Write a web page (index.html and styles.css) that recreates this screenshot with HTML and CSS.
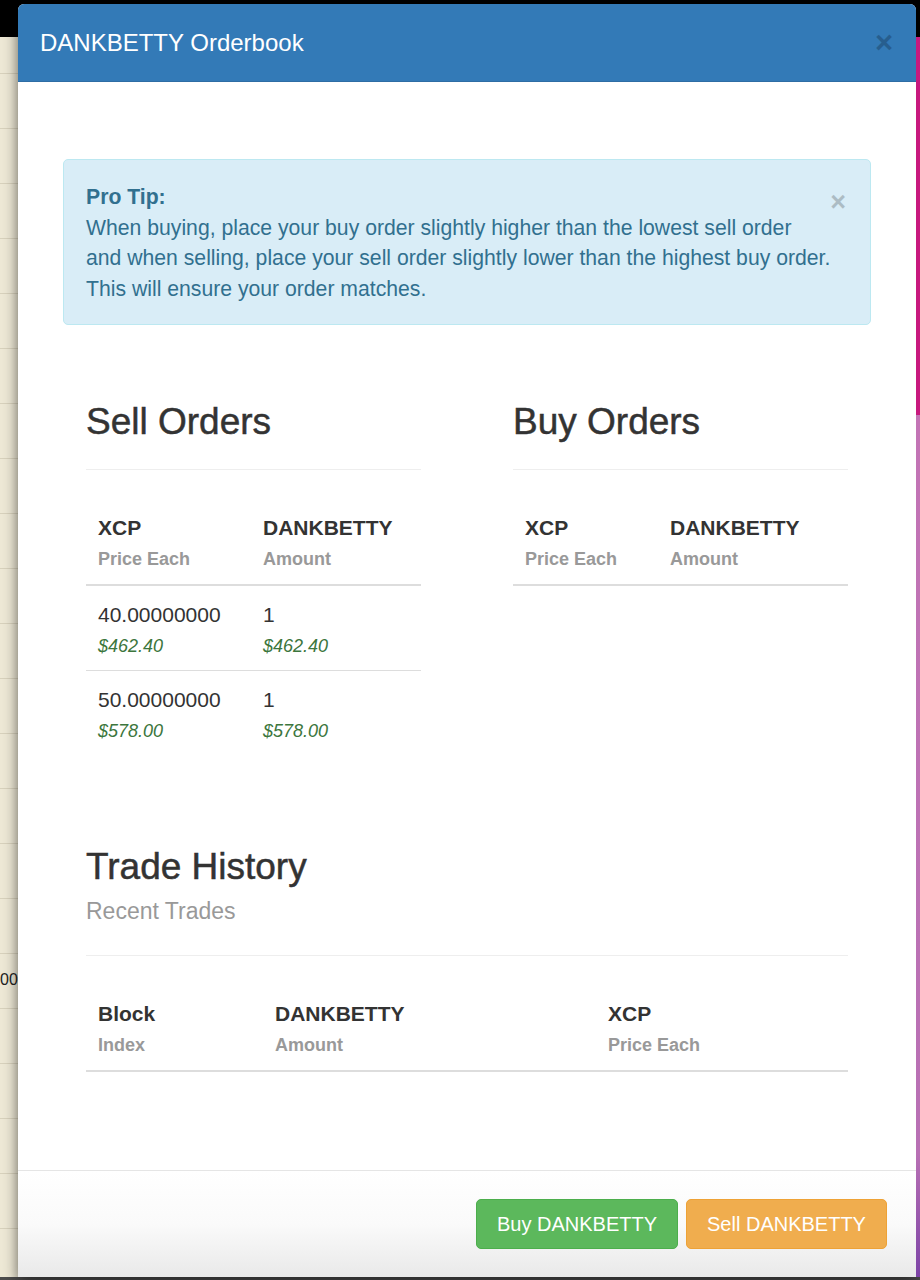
FILE: index.html
```html
<!DOCTYPE html>
<html lang="en">

<head>
  <meta charset="UTF-8">
  <title>DANKBETTY Orderbook</title>
  <link rel="stylesheet" href="styles.css">
</head>

<body>
  <div class="screen">
    <!-- page behind the modal -->
    <div class="side side-left"><span class="stray">00</span></div>

    <div class="modal">
      <div class="modal-header">
        <h4 class="modal-title">DANKBETTY Orderbook</h4>
        <button class="close">&times;</button>
      </div>

      <div class="modal-body">
        <div class="alert">
          <div class="alert-text">
            <strong>Pro Tip:</strong><br>
            When buying, place your buy order slightly higher than the lowest sell order<br>
            and when selling, place your sell order slightly lower than the highest buy order.<br>
            This will ensure your order matches.
          </div>
          <button class="close close-alert">&times;</button>
        </div>

        <div class="orders">
          <div class="order-col">
            <h3>Sell Orders</h3>
            <hr>
            <table class="table table-sell">
              <thead>
                <tr>
                  <th class="col-first">XCP<span class="sub">Price Each</span></th>
                  <th>DANKBETTY<span class="sub">Amount</span></th>
                </tr>
              </thead>
              <tbody>
                <tr>
                  <td>40.00000000<span class="usd">$462.40</span></td>
                  <td>1<span class="usd">$462.40</span></td>
                </tr>
                <tr>
                  <td>50.00000000<span class="usd">$578.00</span></td>
                  <td>1<span class="usd">$578.00</span></td>
                </tr>
              </tbody>
            </table>
          </div>

          <div class="order-col">
            <h3>Buy Orders</h3>
            <hr>
            <table class="table table-buy">
              <thead>
                <tr>
                  <th class="col-first">XCP<span class="sub">Price Each</span></th>
                  <th>DANKBETTY<span class="sub">Amount</span></th>
                </tr>
              </thead>
              <tbody></tbody>
            </table>
          </div>
        </div>

        <div class="history">
          <h3>Trade History</h3>
          <p class="lead">Recent Trades</p>
          <hr>
          <table class="table table-history">
            <thead>
              <tr>
                <th class="col-block">Block<span class="sub">Index</span></th>
                <th class="col-amount">DANKBETTY<span class="sub">Amount</span></th>
                <th>XCP<span class="sub">Price Each</span></th>
              </tr>
            </thead>
            <tbody></tbody>
          </table>
        </div>
      </div>

      <div class="modal-footer">
        <button class="btn btn-buy">Buy DANKBETTY</button>
        <button class="btn btn-sell">Sell DANKBETTY</button>
      </div>
    </div>

    <div class="side side-right"></div>
  </div>
</body>

</html>
```

FILE: styles.css
```css
/* page */
body {
  margin: 0;
  padding: 0;
  font-family: "Liberation Sans", Arial, sans-serif;
  color: #333;
}

.screen {
  display: flex;
  height: 1280px;
  padding-top: 4px;
  box-sizing: border-box;
  background: linear-gradient(to bottom, #000 0, #000 1277px, #4d4d4d 1277px);
}

/* bits of the page behind the modal */
.side {
  flex: none;
  height: 1273px;
}

.side-left {
  width: 18px;
  margin-top: 33px;
  height: 1240px;
  overflow: hidden;
  padding-top: 930px;
  box-sizing: border-box;
  background:
    linear-gradient(to right, rgba(0, 0, 0, 0) 60%, rgba(0, 0, 0, 0.06)),
    repeating-linear-gradient(to bottom, transparent 0, transparent 36px, #d8d2bd 36px, #d8d2bd 37px, transparent 37px, transparent 55px),
    #eee9d6;
}

.stray {
  display: block;
  font-size: 16px;
  line-height: 26px;
  color: #222;
  white-space: nowrap;
}

.side-right {
  width: 4px;
  background: linear-gradient(to bottom, #000 0, #000 33px, #c8197e 33px, #c8197e 411px, #c374b5 411px, #b870b4 1150px, #7c43a6 1273px);
}

/* modal */
.modal {
  flex: none;
  width: 898px;
  height: 1273px;
  display: flex;
  flex-direction: column;
  background-color: #fff;
  border-radius: 6px 6px 0 0;
  overflow: hidden;
  box-shadow: 0 5px 15px rgba(0, 0, 0, 0.5);
}

.modal-header {
  flex: none;
  height: 78px;
  display: flex;
  align-items: center;
  justify-content: space-between;
  padding: 0 22px;
  background-color: #337ab7;
  border-bottom: 1px solid #2e6da4;
  box-sizing: border-box;
}

.modal-title {
  margin: 0;
  font-size: 24px;
  font-weight: normal;
  color: #fff;
}

.close {
  border: 0;
  padding: 0;
  background: none;
  font-family: "Liberation Sans", Arial, sans-serif;
  font-weight: bold;
  line-height: 1;
  color: #000;
  opacity: 0.22;
  cursor: pointer;
}

.modal-header .close {
  font-size: 31px;
  margin-right: 1px;
}

.modal-body {
  flex: 1;
  padding: 77px 45px 0;
}

/* pro tip */
.alert {
  display: flex;
  align-items: flex-start;
  padding: 22px 26px 20px 22px;
  background-color: #d9edf7;
  border: 1px solid #bce8f1;
  border-radius: 5px;
  color: #31708f;
  font-size: 21.2px;
  line-height: 30.5px;
}

.alert-text {
  flex: 1;
  white-space: nowrap;
}

.close-alert {
  font-size: 27px;
  margin-top: 7px;
  opacity: 0.2;
}

/* order tables */
.orders {
  display: grid;
  grid-template-columns: 335px 335px;
  column-gap: 92px;
  padding: 0 23px;
  margin-top: 76px;
}

h3 {
  margin: 0;
  font-size: 37px;
  font-weight: normal;
  line-height: 41px;
  -webkit-text-stroke: 0.5px #333;
}

hr {
  margin: 27px 0 0;
  border: 0;
  border-top: 1px solid #eee;
}

.table {
  width: 100%;
  margin-top: 31px;
  border-collapse: collapse;
  font-size: 21px;
  line-height: 31px;
}

.table th {
  padding: 11px 12px 9px;
  text-align: left;
  vertical-align: bottom;
  border-bottom: 2px solid #ddd;
}

.table td {
  padding: 13px 12px 8px;
  vertical-align: top;
  border-top: 1px solid #ddd;
}

.table tbody tr:first-child td {
  border-top: 0;
}

.sub {
  display: block;
  margin-top: 1px;
  font-size: 18px;
  color: #999;
}

.usd {
  display: block;
  margin-top: 1px;
  font-size: 18px;
  font-style: italic;
  color: #3c763d;
}

.table-sell .col-first {
  width: 141px;
}

.table-buy .col-first {
  width: 121px;
}

/* trade history */
.history {
  margin-top: 91px;
  padding: 0 23px;
}

.lead {
  margin: 9px 0 0;
  font-size: 23px;
  line-height: 30px;
  color: #999;
}

.history hr {
  margin-top: 29px;
}

.table-history .col-block {
  width: 153px;
}

.table-history .col-amount {
  width: 309px;
}

/* footer */
.modal-footer {
  flex: none;
  display: flex;
  justify-content: flex-end;
  gap: 8px;
  padding: 28px 29px;
  border-top: 1px solid #e5e5e5;
  background: linear-gradient(to bottom, #fff 0%, #fafafa 50%, #e9e9e9 100%);
}

.btn {
  height: 50px;
  padding: 0 12px;
  border: 1px solid transparent;
  border-radius: 5px;
  font-family: "Liberation Sans", Arial, sans-serif;
  font-size: 20px;
  color: #fff;
  white-space: nowrap;
  cursor: pointer;
}

.btn-buy {
  width: 202px;
  background-color: #5cb85c;
  border-color: #4cae4c;
}

.btn-sell {
  width: 201px;
  background-color: #f0ad4e;
  border-color: #eea236;
}
```
